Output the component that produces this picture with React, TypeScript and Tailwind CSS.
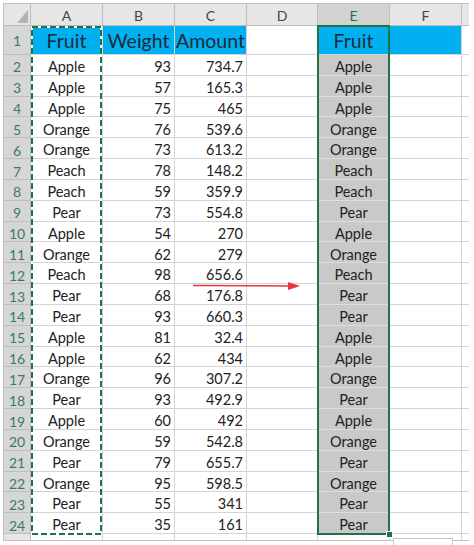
import React from "react";

const rows: [string, number, number][] = [
  ["Apple", 93, 734.7],
  ["Apple", 57, 165.3],
  ["Apple", 75, 465],
  ["Orange", 76, 539.6],
  ["Orange", 73, 613.2],
  ["Peach", 78, 148.2],
  ["Peach", 59, 359.9],
  ["Pear", 73, 554.8],
  ["Apple", 54, 270],
  ["Orange", 62, 279],
  ["Peach", 98, 656.6],
  ["Pear", 68, 176.8],
  ["Pear", 93, 660.3],
  ["Apple", 81, 32.4],
  ["Apple", 62, 434],
  ["Orange", 96, 307.2],
  ["Pear", 93, 492.9],
  ["Apple", 60, 492],
  ["Orange", 59, 542.8],
  ["Pear", 79, 655.7],
  ["Orange", 95, 598.5],
  ["Pear", 55, 341],
  ["Pear", 35, 161],
];

const cols = ["A", "B", "C", "D", "E", "F"];

export default function App() {
  const font = { fontFamily: "Lato, 'Liberation Sans', sans-serif" };
  return (
    <div className="w-[474px] h-[545px] bg-white overflow-hidden pl-[3px] pt-[3px]" style={font}>
      <div className="relative w-[466px] border-l border-t border-[#c0c0c0]">
        <div className="grid grid-cols-[27px_72px_72px_72px_71px_72px_72px_7px] grid-rows-[22px_29px_repeat(23,20.83px)_6px] border-r border-b border-[#c0c0c0]">
          {/* header row */}
          <div className="relative bg-[#e6e6e6] border-r border-b border-[#bdbdbd]">
            <svg className="absolute left-[13px] top-[6px]" width="11" height="13" viewBox="0 0 11 13">
              <polygon points="11,0 11,13 0,13" fill="#b3b3b3" />
            </svg>
          </div>
          {cols.map((c) => (
            <div
              key={c}
              className={
                c === "E"
                  ? "bg-[#d2d2d2] text-[#217346] border-r border-b border-[#bdbdbd] flex items-center justify-center pt-[1px] text-[14px]"
                  : "bg-[#e6e6e6] text-[#444444] border-r border-b border-[#bdbdbd] flex items-center justify-center pt-[1px] text-[14px]"
              }
            >
              {c}
            </div>
          ))}
          <div className="bg-[#e6e6e6] border-b border-[#bdbdbd]" />

          {/* row 1 */}
          <div className="bg-[#d6d6d6] text-[#3a7d5a] border-r border-b border-[#bdbdbd] flex items-end justify-center pb-[3px] text-[14px]">
            1
          </div>
          <div className="bg-[#00b0f0] border-r border-b border-[#d4d4d4] flex items-end justify-center text-[19.5px] text-[#1c2a3a] leading-none">
            <span className="pb-[4px]">Fruit</span>
          </div>
          <div className="bg-[#00b0f0] border-r border-b border-[#d4d4d4] flex items-end justify-center text-[19.5px] text-[#1c2a3a] leading-none whitespace-nowrap">
            <span className="pb-[4px]">Weight</span>
          </div>
          <div className="bg-[#00b0f0] border-r border-b border-[#d4d4d4] flex items-end justify-center text-[19.5px] text-[#1c2a3a] leading-none whitespace-nowrap">
            <span className="pb-[4px]">Amount</span>
          </div>
          <div className="bg-white border-r border-b border-[#d4d4d4]" />
          <div className="bg-[#00b0f0] border-r border-b border-[#d4d4d4] flex items-end justify-center text-[19.5px] text-[#1c2a3a] leading-none">
            <span className="pb-[4px]">Fruit</span>
          </div>
          <div className="bg-[#00b0f0] border-r border-b border-[#d4d4d4]" />
          <div className="bg-white border-b border-[#d4d4d4]" />

          {rows.map(([f, w, a], i) => (
            <React.Fragment key={i}>
              <div className="bg-[#d6d6d6] text-[#3a7d5a] border-r border-b border-[#bdbdbd] flex items-center justify-center pt-[4px] text-[14px]">
                {i + 2}
              </div>
              <div className="bg-white border-r border-b border-[#d4d4d4] flex items-center justify-center pt-[4px] text-[14.5px] text-[#222222]">
                {f}
              </div>
              <div className="bg-white border-r border-b border-[#d4d4d4] flex items-center justify-end pr-[3px] pt-[4px] text-[14.5px] text-[#222222]">
                {w}
              </div>
              <div className="bg-white border-r border-b border-[#d4d4d4] flex items-center justify-end pr-[3px] pt-[4px] text-[14.5px] text-[#222222]">
                {a}
              </div>
              <div className="bg-white border-r border-b border-[#d4d4d4]" />
              <div className="bg-[#c9c9c9] border-r border-b border-[#dcdcdc] flex items-center justify-center pt-[4px] text-[14.5px] text-[#222222]">
                {f}
              </div>
              <div className="bg-white border-r border-b border-[#d4d4d4]" />
              <div className="bg-white border-b border-[#d4d4d4]" />
            </React.Fragment>
          ))}

          {/* partial row 25 */}
          <div className="bg-[#e6e6e6] border-r border-[#bdbdbd]" />
          <div className="bg-white border-r border-[#d4d4d4]" />
          <div className="bg-white border-r border-[#d4d4d4]" />
          <div className="bg-white border-r border-[#d4d4d4]" />
          <div className="bg-white border-r border-[#d4d4d4]" />
          <div className="bg-white border-r border-[#d4d4d4]" />
          <div className="bg-white border-r border-[#d4d4d4]" />
          <div className="bg-white" />
        </div>

        {/* copy marquee around A1:A24 */}
        <svg className="absolute left-[27px] top-[22px] pointer-events-none" width="71" height="509" viewBox="0 0 71 509">
          <rect x="1" y="1" width="69" height="507" fill="none" stroke="white" strokeWidth="2" />
          <rect x="1" y="1" width="69" height="507" fill="none" stroke="#217346" strokeWidth="2" strokeDasharray="6 3" />
        </svg>

        {/* selection E1:E24 */}
        <div className="absolute left-[313px] top-[21px] w-[73px] h-[510px] border-2 border-[#217346] pointer-events-none" />
        <div className="absolute left-[382px] top-[527px] w-[7px] h-[7px] bg-[#217346] border border-white" />

        {/* paste options edge */}
        <div className="absolute left-[389px] top-[534px] w-[60px] h-[8px] border border-[#c6c6c6] bg-white" />

        {/* red arrow */}
        <svg className="absolute left-[186px] top-[275px] pointer-events-none" width="112" height="14" viewBox="0 0 112 14">
          <line x1="3" y1="6.5" x2="100" y2="7" stroke="#e8363e" strokeWidth="1.6" />
          <polygon points="110,7 98,3 98,11" fill="#e8363e" />
        </svg>
      </div>
    </div>
  );
}
